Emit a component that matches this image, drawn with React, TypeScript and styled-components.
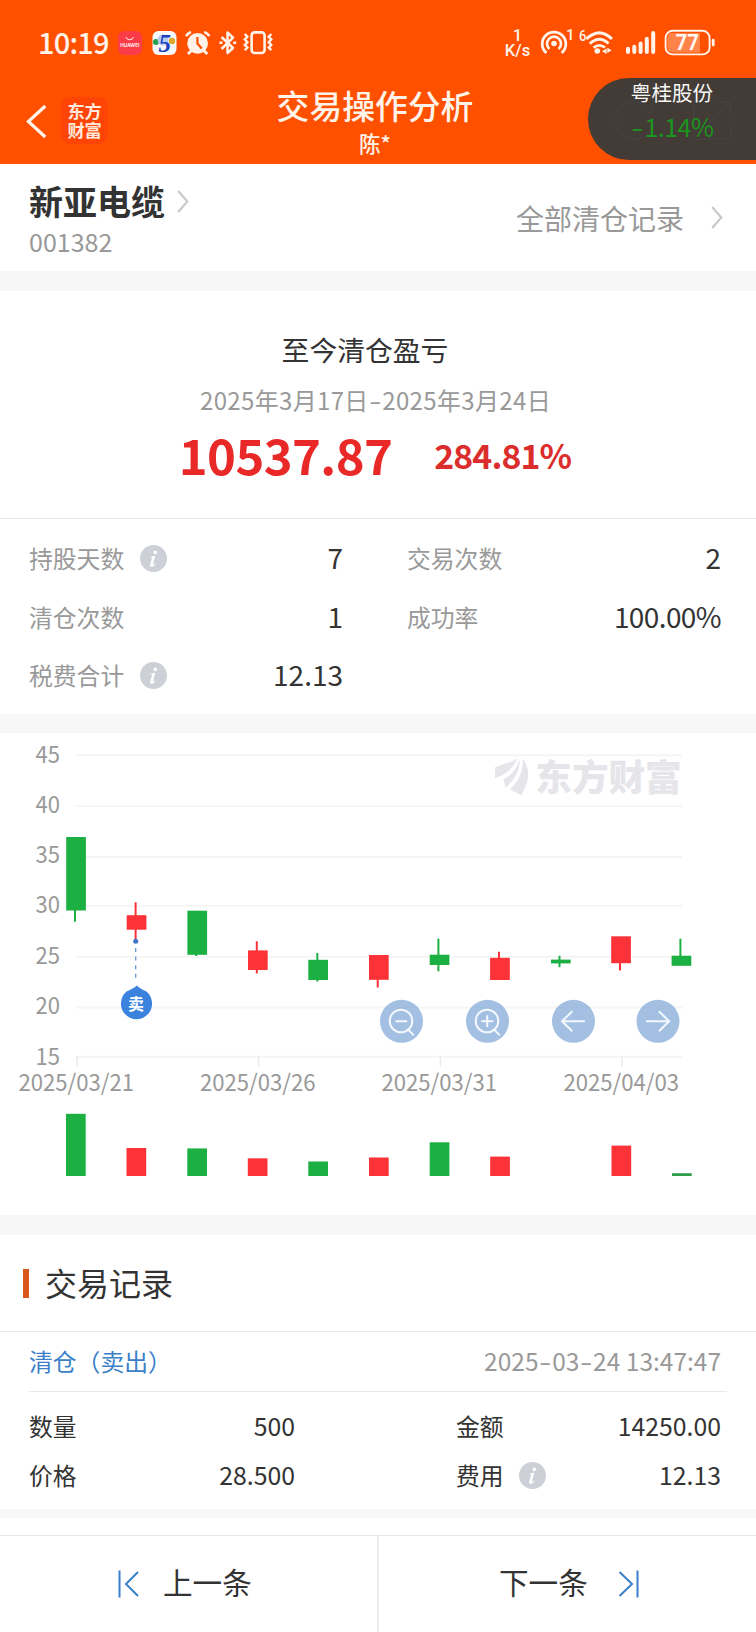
import React from "react";
import styled, { createGlobalStyle } from "styled-components";

const GlobalStyle = createGlobalStyle`
  * { box-sizing: border-box; }
  body {
    margin: 0;
    background: #fff;
    font-family: "Noto Sans CJK SC", "Noto Sans", sans-serif;
    color: #333;
  }
`;

const Screen = styled.main`
  width: 756px;
  height: 1632px;
  display: flex;
  flex-direction: column;
  overflow: hidden;
  background: #fff;
`;

const Band = styled.div<{ $h: number }>`
  height: ${(p) => p.$h}px;
  flex: none;
  background: #f7f7f7;
`;

const Txt = styled.span<{
  $size: number;
  $color?: string;
  $weight?: number;
  $track?: number;
}>`
  font-size: ${(p) => p.$size}px;
  line-height: 1;
  color: ${(p) => p.$color ?? "#333"};
  font-weight: ${(p) => p.$weight ?? 400};
  letter-spacing: ${(p) => p.$track ?? 0}px;
  white-space: nowrap;
`;

/* A hyphen as wide as the figures' own dash */
const Dash = styled.span`
  display: inline-block;
  letter-spacing: 0;
  margin: 0 2.6px;
  transform: scaleX(1.45);
`;

/* ---------- header ---------- */

const Header = styled.header`
  position: relative;
  height: 164px;
  flex: none;
  background: #ff5000;
`;

const StatusBar = styled.div`
  height: 86px;
  padding: 0 41px 0 38px;
  display: flex;
  align-items: center;
  justify-content: space-between;
`;

const StatusGroup = styled.div`
  display: flex;
  align-items: center;
  svg { display: block; flex: none; }
`;

const Clock = styled.div`
  width: 80px;
  font-size: 29px;
  line-height: 29px;
  font-weight: 500;
  letter-spacing: -0.8px;
  color: #fff3ea;
  padding-bottom: 3px;
`;

const Speed = styled.div`
  width: 34px;
  display: grid;
  grid-template-rows: 15px 16px;
  font: 500 16.5px/16px "Roboto", sans-serif;
  color: #fff3ea;
  text-align: center;
  padding-right: 7px;
  justify-items: center;
  white-space: nowrap;
`;

const Nav = styled.div`
  height: 78px;
  display: grid;
  grid-template-columns: 247px 1fr 253px;
`;

const NavLeft = styled.div`
  display: flex;
  align-items: flex-start;
  padding: 11px 0 0 25px;
`;

const BrandTile = styled.div`
  width: 47px;
  height: 47px;
  margin-left: 11px;
  border-radius: 9px;
  background: #ff4505;
  color: #ffe9dc;
  font-size: 17.3px;
  line-height: 19px;
  font-weight: 700;
  letter-spacing: -0.2px;
  text-align: center;
  padding-top: 4px;
`;

const NavTitle = styled.div`
  display: flex;
  flex-direction: column;
  align-items: center;
  gap: 10px;
  padding-top: 3px;
`;

const Ticker = styled.div`
  position: absolute;
  right: 0;
  top: 78px;
  width: 168px;
  height: 82px;
  border-radius: 41px 0 0 41px;
  background: #423b36;
`;

const TickerGhost = styled.svg`
  position: absolute;
  left: 0;
  top: 0;
`;

const TickerText = styled.div`
  position: relative;
  width: 168px;
  display: flex;
  flex-direction: column;
  align-items: center;
  gap: 11px;
  padding-top: 4px;
`;

/* ---------- stock ---------- */

const StockBar = styled.section`
  height: 107px;
  flex: none;
  display: flex;
  justify-content: space-between;
  padding: 0 33px 0 29px;
`;

const StockName = styled.div`
  display: flex;
  flex-direction: column;
  padding-top: 20px;
  gap: 11px;
`;

const Inline = styled.div<{ $gap: number }>`
  display: flex;
  align-items: center;
  gap: ${(p) => p.$gap}px;
  svg { display: block; flex: none; }
`;

const AllRecords = styled(Inline)`
  height: 107px;
`;

/* ---------- summary ---------- */

const Summary = styled.section`
  height: 228px;
  flex: none;
  display: flex;
  flex-direction: column;
  align-items: center;
  padding-top: 45px;
  padding-right: 6px;
  border-bottom: 1px solid #e9e9e9;
`;

const SummaryTitle = styled(Txt)`
  margin-right: 20px;
`;

const DateRange = styled(Txt)`
  margin-top: 24px;
  padding-left: 1px;
`;

const Profit = styled.div`
  margin-top: 14px;
  height: 55px;
  display: flex;
  align-items: center;
  gap: 42px;
`;

const Percent = styled(Txt)`
  padding-top: 3px;
`;

const Stats = styled.section`
  height: 195px;
  flex: none;
  padding: 10px 35px 0 29px;
  display: grid;
  grid-template-columns: 314px 314px;
  column-gap: 64px;
  grid-auto-rows: 58.5px;
`;

const Stat = styled.div`
  display: flex;
  align-items: center;
  justify-content: space-between;
  svg { display: block; }
`;

const Value = styled(Txt)`
  padding-bottom: 2px;
`;

/* ---------- chart ---------- */

const ChartBox = styled.section`
  height: 482px;
  flex: none;
  svg { display: block; }
`;

/* ---------- records ---------- */

const RecordsTitle = styled.section`
  height: 97px;
  flex: none;
  display: flex;
  align-items: center;
  gap: 16px;
  padding-left: 23px;
  border-bottom: 1px solid #e8e8e8;
`;

const RecordsLabel = styled(Txt)`
  padding-bottom: 2px;
`;

const Accent = styled.div`
  width: 6px;
  height: 29px;
  background: #d9561b;
`;

const RecordHead = styled.div`
  height: 60px;
  flex: none;
  margin: 0 29px;
  padding: 0 6px 0 0;
  display: flex;
  align-items: center;
  justify-content: space-between;
  border-bottom: 1px solid #e8e8e8;
`;

const RecordGrid = styled.div`
  height: 117px;
  flex: none;
  padding: 10px 35px 0 29px;
  display: grid;
  grid-template-columns: 266px 265px;
  justify-content: space-between;
  grid-auto-rows: 49px;
`;

const RecordKey = styled(Txt)`
  padding-bottom: 1px;
`;

const Footer = styled.footer`
  margin-top: 17px;
  height: 97px;
  flex: none;
  border-top: 1px solid #e8e8e8;
  display: grid;
  grid-template-columns: 377px 379px;
`;

const FooterButton = styled.div<{ $side: "prev" | "next" }>`
  display: flex;
  align-items: center;
  gap: ${(p) => (p.$side === "prev" ? 24 : 30)}px;
  padding-left: ${(p) => (p.$side === "prev" ? 117 : 120)}px;
  border-left: ${(p) => (p.$side === "next" ? "2px solid #ededed" : "0")};
  svg { display: block; }
`;

const FooterLabel = styled(Txt)`
  padding-bottom: 4px;
`;

const Chevron = () => (
  <svg width="12" height="23" viewBox="0 0 12 23" fill="none" stroke="#c9c9cb" strokeWidth="2.2">
    <path d="M1.2 1 L10.3 11.5 L1.2 22" />
  </svg>
);

const Info = () => (
  <svg width="27" height="27" viewBox="0 0 27 27">
    <circle cx="13.5" cy="13.5" r="13.5" fill="#cdd0d6" />
    <circle cx="15.3" cy="7.4" r="1.8" fill="#fff" />
    <path
      d="M10.6 11.8 C12.4 11.2 13.6 10.8 15.3 10.7 L12.9 19.4 C12.8 20.3 13.9 19.8 15 18.5 L15.6 19 C14.2 21.4 12.5 22 11.2 21.8 C10 21.5 9.9 20.5 10.2 19.4 L12 12.9 C12 12.3 11.5 12.4 10.5 12.6 Z"
      fill="#fff"
    />
  </svg>
);

const GREEN = "#1bb041";
const RED = "#fb3338";

type Candle = {
  x: number;
  top: number;
  bottom: number;
  wick: number;
  high: number;
  low: number;
  color: string;
};

const candles: Candle[] = [
  { x: 66.2, top: 837, bottom: 910.5, wick: 75, high: 837, low: 921.7, color: GREEN },
  { x: 126.7, top: 915.2, bottom: 929.7, wick: 135.6, high: 902.3, low: 940, color: RED },
  { x: 187.4, top: 910.7, bottom: 954.8, wick: 196.2, high: 911, low: 956, color: GREEN },
  { x: 248, top: 950.4, bottom: 970, wick: 256.8, high: 941.3, low: 973.4, color: RED },
  { x: 308.3, top: 959.8, bottom: 980, wick: 317.3, high: 953, low: 981.6, color: GREEN },
  { x: 369, top: 955, bottom: 979.8, wick: 377.7, high: 955, low: 987.5, color: RED },
  { x: 429.7, top: 954.7, bottom: 965, wick: 438.4, high: 938.7, low: 971.3, color: GREEN },
  { x: 490.1, top: 957.8, bottom: 980, wick: 499, high: 951.8, low: 979, color: RED },
  { x: 551, top: 959.6, bottom: 963.4, wick: 559.5, high: 955.8, low: 967.2, color: GREEN },
  { x: 611.2, top: 936.3, bottom: 963.2, wick: 620, high: 937, low: 970.4, color: RED },
  { x: 671.6, top: 955.7, bottom: 965.8, wick: 680.4, high: 938.7, low: 965, color: GREEN },
];

const volumes = [
  { x: 66, top: 1113.8, color: GREEN },
  { x: 126.5, top: 1148, color: RED },
  { x: 187.3, top: 1148.4, color: GREEN },
  { x: 247.8, top: 1158.3, color: RED },
  { x: 308.3, top: 1161.5, color: GREEN },
  { x: 369, top: 1157.5, color: RED },
  { x: 429.7, top: 1142.3, color: GREEN },
  { x: 490.2, top: 1156.6, color: RED },
  { x: 611.5, top: 1145.6, color: RED },
  { x: 672, top: 1173.2, color: "#2f9d48" },
];

const scale = [
  { label: "45", y: 755.3, base: 763 },
  { label: "40", y: 806.2, base: 813.2 },
  { label: "35", y: 857, base: 863.3 },
  { label: "30", y: 905.8, base: 913.3 },
  { label: "25", y: 956.7, base: 963.5 },
  { label: "20", y: 1007.4, base: 1013.8 },
  { label: "15", y: 1056.7, base: 1064.8 },
];

const dates = [
  { label: "2025/03/21", x: 19, tick: 77 },
  { label: "2025/03/26", x: 200.5, tick: 258.6 },
  { label: "2025/03/31", x: 382, tick: 440.4 },
  { label: "2025/04/03", x: 564, tick: 622.2 },
];

const Chart = () => (
  <svg
    width="756"
    height="482"
    viewBox="0 733 756 482"
    fontFamily='"Noto Sans CJK SC", sans-serif'
  >
    {scale.map((s) => (
      <g key={s.label}>
        <line x1="76" x2="682" y1={s.y} y2={s.y} stroke="#f5f5f5" strokeWidth="2" />
        <text x="35.5" y={s.base} fontSize="22.8" fill="#999" textLength="24.5" lengthAdjust="spacingAndGlyphs">
          {s.label}
        </text>
      </g>
    ))}
    {dates.map((d) => (
      <g key={d.label}>
        <line x1={d.tick} x2={d.tick} y1="1056" y2="1066.5" stroke="#ebebeb" strokeWidth="1.6" />
        <text x={d.x - 0.6} y="1090.7" fontSize="22.8" fill="#999" textLength="115.6" lengthAdjust="spacingAndGlyphs">
          {d.label}
        </text>
      </g>
    ))}

    {/* brand watermark */}
    <g fill="#e5e5ea">
      <path d="M495 767.5 C503 763.5 511 763 517.5 758.2 C512 770 505 775 495 778 Z" />
      <path d="M519.8 758.5 C520 770 515 780 505.5 787.5 C504.5 784 504 781.5 503.8 779.2 C512 775 517.5 768 519.8 758.5 Z" />
      <path d="M522.3 758.3 C524 769 519.5 781 510 789.5 L521 795.3 C527.5 785 532.5 770 522.3 758.3 Z" />
      <text x="535.3" y="790.8" fontSize="36.6" fontWeight="900">
        东方财富
      </text>
    </g>

    {candles.map((c) => (
      <g key={c.x}>
        <line x1={c.wick} x2={c.wick} y1={c.high} y2={c.low} stroke={c.color} strokeWidth="2" />
        <rect x={c.x} y={c.top} width="19.7" height={c.bottom - c.top} fill={c.color} />
      </g>
    ))}

    {/* sell marker */}
    <circle cx="135.7" cy="941.2" r="2.5" fill="#4176c8" />
    <line x1="135.7" x2="135.7" y1="948" y2="981" stroke="#5f9ad6" strokeWidth="1.3" strokeDasharray="4 4.6" />
    <path
      d="M136.8 985.4 C139 988 143 989.4 146.5 991.6 A15.6 15.6 0 1 1 126.5 991.6 C130 989.4 134.6 988 136.8 985.4 Z"
      fill="#3a82dd"
    />
    <text x="136" y="1009.6" fontSize="16" fontWeight="700" fill="#fff" textAnchor="middle">
      卖
    </text>

    {/* chart controls */}
    {[401.5, 487.5, 573.5, 658].map((cx) => (
      <circle key={cx} cx={cx} cy="1021.3" r="21.5" fill="#8cb0dc" fillOpacity="0.8" />
    ))}
    <g fill="none" stroke="#f4f8fd" strokeWidth="2">
      <circle cx="401" cy="1021" r="11.3" />
      <path d="M395.4 1021.2 H407.2 M407.6 1029 L413.8 1035.4" />
      <circle cx="487" cy="1021" r="11.3" />
      <path d="M481.4 1021.2 H493.2 M487.2 1015.3 V1027.1 M493.6 1029 L499.8 1035.4" />
      <path d="M585 1021.3 H562 M572.3 1011.3 L562 1021.3 L572.3 1031.3" />
      <path d="M646 1021.3 H669 M658.9 1011.3 L669.2 1021.3 L658.9 1031.3" />
    </g>

    {volumes.map((v) => (
      <rect key={v.x} x={v.x} y={v.top} width="19.7" height={1176 - v.top} fill={v.color} />
    ))}
  </svg>
);

const AppIcons = () => (
  <svg width="156" height="26" viewBox="118 30 156 26" fill="none" stroke="#fff3ea">
    <rect x="118" y="31" width="24" height="24" rx="6" fill="#fb3b48" stroke="none" />
    <path d="M126 37 a3.8 3.6 0 0 0 7.4 0" strokeWidth="1" />
    <text x="129.8" y="47" fontSize="5" fontWeight="600" fill="#fff" stroke="none" textAnchor="middle" textLength="19" lengthAdjust="spacingAndGlyphs" fontFamily="Inter, sans-serif">
      HUAWEI
    </text>
    <rect x="152.5" y="31" width="24" height="24" rx="6" fill="#f8fafb" stroke="none" />
    <circle cx="156" cy="42" r="3" fill="#20a050" stroke="none" />
    <circle cx="172" cy="41" r="3.2" fill="#dca92d" stroke="none" />
    <circle cx="163" cy="40" r="5.5" fill="#b7cdf0" stroke="none" />
    <text x="164.8" y="52" fontSize="25" fontWeight="700" fontStyle="italic" fill="#1d3fc0" stroke="none" textAnchor="middle" fontFamily='"Liberation Serif", serif'>
      5
    </text>
    {/* alarm */}
    <circle cx="197.6" cy="43.4" r="10.4" fill="#fff3ea" stroke="none" />
    <path d="M186 36.2 Q187.4 33.2 191 32 M204.2 32 Q207.8 33.2 209.3 36.2" strokeWidth="2.6" />
    <path d="M191.5 50.5 L188 54 M203.7 50.5 L207.3 54" strokeWidth="2.8" />
    <path d="M197.4 37 V43.6 L201.8 48.6" stroke="#ff5000" strokeWidth="2.2" />
    {/* bluetooth */}
    <path d="M221.5 37 L233 48 L227.5 53 V32.5 L233 37.6 L221.5 49" strokeWidth="2.5" strokeLinejoin="round" />
    <path d="M219.4 42.7 h3 M233.2 42.7 h3" strokeWidth="2.6" />
    {/* vibrate */}
    <rect x="251.6" y="32.4" width="13" height="20.6" rx="3" strokeWidth="2.6" />
    <path d="M244.8 34 l2.6 2.8 l-2.6 2.6 l2.6 2.8 l-2.6 2.7 l2.6 2.6 l-2.6 2.7 M271.3 34 l-2.6 2.8 l2.6 2.6 l-2.6 2.8 l2.6 2.7 l-2.6 2.6 l2.6 2.7" strokeWidth="2.4" />
  </svg>
);

const SignalIcons = () => (
  <svg width="177" height="38" viewBox="538 24 177 38" fill="none" stroke="#fff3ea" fontFamily="Roboto, sans-serif">
    {/* hotspot */}
    <circle cx="554" cy="43.5" r="2.8" fill="#fff3ea" stroke="none" />
    <path d="M549.4 49 a7 7 0 1 1 9.2 0" strokeWidth="2.7" />
    <path d="M546.4 52.9 a11.8 11.8 0 1 1 15.2 0" strokeWidth="2.8" />
    <text x="566" y="40.2" fontSize="15" fontWeight="500" fill="#fff3ea" stroke="none">
      1
    </text>
    <text x="579" y="41" fontSize="15" fontWeight="500" fill="#fff3ea" stroke="none" textLength="7.4" lengthAdjust="spacingAndGlyphs">
      6
    </text>
    {/* wifi */}
    <path d="M586.3 39 Q599.5 26.8 612 39" strokeWidth="2.9" />
    <path d="M589.8 43.6 Q599.5 34.8 608.6 43.6" strokeWidth="2.8" />
    <path d="M593.5 47.6 Q599.5 43 605 47.6" strokeWidth="2.6" />
    <circle cx="597.3" cy="51" r="2.8" fill="#fff3ea" stroke="none" />
    <path d="M602 51.3 l4.6 -2.8 v5.6 z M611.6 50.3 l-4.3 -2.6 v5.4 z" fill="#fff3ea" stroke="none" />
    {/* cellular */}
    <path d="M628 52 V48.8 M634.3 52 V46.8 M640.6 52 V43.5 M646.8 52 V38.8 M653.2 52 V33" strokeWidth="4" strokeLinecap="round" />
    {/* battery */}
    <rect x="665.6" y="30.8" width="44" height="23.6" rx="7" strokeWidth="1.9" />
    <path d="M672 33 H700 V52.4 H672 Q667.4 52.4 667.4 47.5 V38 Q667.4 33 672 33 Z" fill="#ff8249" stroke="none" />
    <text x="687.2" y="50" fontSize="21.5" fontWeight="700" fill="#fff8f2" stroke="none" textAnchor="middle" textLength="23.5" lengthAdjust="spacingAndGlyphs">
      77
    </text>
    <path d="M713.2 40.2 V45" strokeWidth="2.8" strokeLinecap="round" />
  </svg>
);

export default function App() {
  return (
    <>
      <GlobalStyle />
      <Screen>
        <Header>
          <StatusBar>
            <StatusGroup>
              <Clock>10:19</Clock>
              <AppIcons />
            </StatusGroup>
            <StatusGroup>
              <Speed>
                <span>1</span>
                <span>K/s</span>
              </Speed>
              <SignalIcons />
            </StatusGroup>
          </StatusBar>
          <Nav>
            <NavLeft>
              <svg width="25" height="47" viewBox="0 0 25 47" fill="none" stroke="#fff3ea" strokeWidth="3.2">
                <path d="M20.3 9 L3.4 24.5 L20.3 40" />
              </svg>
              <BrandTile>
                东方
                <br />
                财富
              </BrandTile>
            </NavLeft>
            <NavTitle>
              <Txt $size={32.8} $color="#fff3ea" $weight={500}>交易操作分析</Txt>
              <Txt $size={21.5} $color="#fff3ea" $weight={500}>陈*</Txt>
            </NavTitle>
          </Nav>
          <Ticker>
            <TickerGhost width="168" height="82" fill="none" stroke="#423f3d" strokeWidth="2.6">
              <path d="M60 29 A19 19 0 1 0 65 46 M64 24 V34 H54" />
              <path d="M126 23 H106 V61 H143 V46 M130 24 H143 V37 M143 24 L119 48" />
            </TickerGhost>
            <TickerText>
              <Txt $size={20.6} $color="#f8f8f6">粤桂股份</Txt>
              <Txt $size={25} $color="#1b951d" $track={-0.5}>
                <Dash>-</Dash>1.14%
              </Txt>
            </TickerText>
          </Ticker>
        </Header>

        <StockBar>
          <StockName>
            <Inline $gap={12}>
              <Txt $size={34} $weight={700}>新亚电缆</Txt>
              <Chevron />
            </Inline>
            <Txt $size={25} $color="#999">001382</Txt>
          </StockName>
          <AllRecords $gap={27}>
            <Txt $size={28} $color="#999">全部清仓记录</Txt>
            <Chevron />
          </AllRecords>
        </StockBar>

        <Band $h={20} />

        <Summary>
          <SummaryTitle $size={27.8}>至今清仓盈亏</SummaryTitle>
          <DateRange $size={24} $color="#999" $track={0.35}>
            2025年3月17日<Dash>-</Dash>2025年3月24日
          </DateRange>
          <Profit>
            <Txt $size={49} $weight={700} $color="#e92828" $track={-0.6}>10537.87</Txt>
            <Percent $size={33.8} $weight={700} $color="#dc2d2d" $track={-0.9}>284.81%</Percent>
          </Profit>
        </Summary>

        <Stats>
          <Stat>
            <Inline $gap={16}>
              <Txt $size={23.8} $color="#999">持股天数</Txt>
              <Info />
            </Inline>
            <Value $size={28}>7</Value>
          </Stat>
          <Stat>
            <Txt $size={23.8} $color="#999">交易次数</Txt>
            <Value $size={28}>2</Value>
          </Stat>
          <Stat>
            <Txt $size={23.8} $color="#999">清仓次数</Txt>
            <Value $size={28}>1</Value>
          </Stat>
          <Stat>
            <Txt $size={23.8} $color="#999">成功率</Txt>
            <Value $size={28} $track={-0.6}>100.00%</Value>
          </Stat>
          <Stat>
            <Inline $gap={16}>
              <Txt $size={23.8} $color="#999">税费合计</Txt>
              <Info />
            </Inline>
            <Value $size={28}>12.13</Value>
          </Stat>
        </Stats>

        <Band $h={19} />

        <ChartBox>
          <Chart />
        </ChartBox>

        <Band $h={20} />

        <RecordsTitle>
          <Accent />
          <RecordsLabel $size={32}>交易记录</RecordsLabel>
        </RecordsTitle>
        <RecordHead>
          <RecordKey $size={23.8} $color="#3b7fc9">清仓（卖出）</RecordKey>
          <Txt $size={24.5} $color="#999">
            2025<Dash>-</Dash>03<Dash>-</Dash>24 13:47:47
          </Txt>
        </RecordHead>
        <RecordGrid>
          <Stat>
            <RecordKey $size={23.8}>数量</RecordKey>
            <Value $size={24.8}>500</Value>
          </Stat>
          <Stat>
            <RecordKey $size={23.8}>金额</RecordKey>
            <Value $size={24.8}>14250.00</Value>
          </Stat>
          <Stat>
            <RecordKey $size={23.8}>价格</RecordKey>
            <Value $size={24.8}>28.500</Value>
          </Stat>
          <Stat>
            <Inline $gap={15}>
              <RecordKey $size={23.8}>费用</RecordKey>
              <Info />
            </Inline>
            <Value $size={24.8}>12.13</Value>
          </Stat>
        </RecordGrid>

        <Band $h={9} />

        <Footer>
          <FooterButton $side="prev">
            <svg width="22" height="28" viewBox="0 0 22 28" fill="none" stroke="#3b7fc9" strokeWidth="2">
              <path d="M2.5 0.5 V27.5 M21 2 L9 14 L21 26" />
            </svg>
            <FooterLabel $size={29.6}>上一条</FooterLabel>
          </FooterButton>
          <FooterButton $side="next">
            <FooterLabel $size={29.6}>下一条</FooterLabel>
            <svg width="22" height="28" viewBox="0 0 22 28" fill="none" stroke="#3b7fc9" strokeWidth="2">
              <path d="M1.5 2 L14 14 L1.5 26 M19.5 0.5 V27.5" />
            </svg>
          </FooterButton>
        </Footer>
      </Screen>
    </>
  );
}
